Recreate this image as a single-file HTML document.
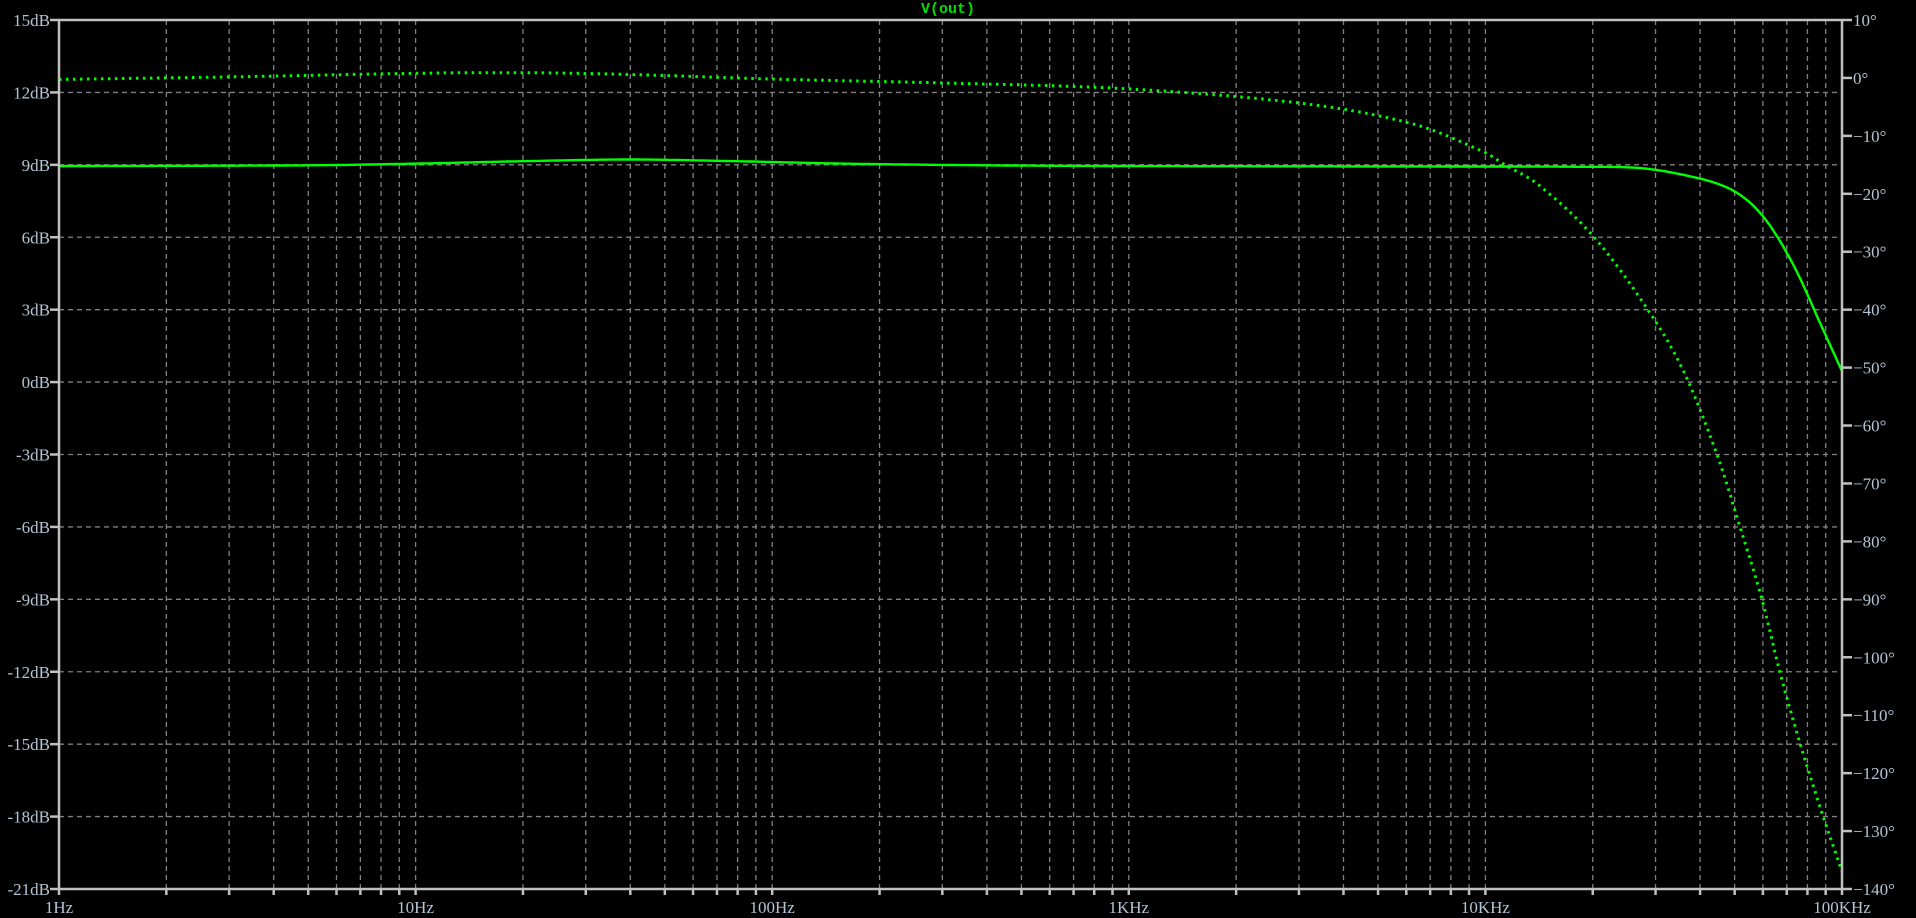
<!DOCTYPE html>
<html><head><meta charset="utf-8">
<style>
html,body{margin:0;padding:0;background:#000;width:1916px;height:918px;overflow:hidden}
svg{display:block}
.l{font-family:"Liberation Serif",serif;font-size:17px;fill:#b4c4d4}
</style></head>
<body>
<svg id="s" width="1916" height="918" xmlns="http://www.w3.org/2000/svg">
<rect width="1916" height="918" fill="#000"/>
<g id="grid"></g>
<g id="labels"></g>
<text x="948" y="13" text-anchor="middle" font-family="Liberation Mono,monospace" font-weight="bold" font-size="15" fill="#00e000">V(out)</text>
<path id="mag" fill="none" stroke="#00ff00" stroke-width="2.4"/>
<path id="ph" fill="none" stroke="#00ff00" stroke-width="3" stroke-dasharray="2.5 4.5"/>
<rect x="59" y="20" width="1783" height="869" fill="none" stroke="#c0c0c0" stroke-width="2.5"/>
</svg>
<script>
var L=59,R=1842,T=20,B=889,W=R-L,H=B-T,D=W/5;
var NS="http://www.w3.org/2000/svg";
function el(p,t,a,txt){var e=document.createElementNS(NS,t);for(var k in a)e.setAttribute(k,a[k]);if(txt)e.textContent=txt;p.appendChild(e);return e;}
var g=document.getElementById('grid'),lb=document.getElementById('labels');
var names=["1Hz","10Hz","100Hz","1KHz","10KHz","100KHz"];
for(var d=0;d<5;d++){for(var m=1;m<10;m++){var x=L+D*(d+Math.log10(m));
 if(!(d==0&&m==1))el(g,'line',{x1:x,y1:T,x2:x,y2:B,stroke:'#808080','stroke-width':1.3,'stroke-dasharray':'5 4'});
 el(g,'line',{x1:x,y1:B,x2:x,y2:B+6,stroke:'#c0c0c0','stroke-width':2.5});}}
el(g,'line',{x1:R,y1:B,x2:R,y2:B+6,stroke:'#c0c0c0','stroke-width':2.5});
for(var i=0;i<6;i++){el(lb,'text',{x:L+D*i,y:913,'text-anchor':'middle','class':'l'},names[i]);}
for(var i=0;i<=12;i++){var y=T+H*i/12;var v=15-3*i;
 if(i>0&&i<12)el(g,'line',{x1:L,y1:y,x2:R,y2:y,stroke:'#808080','stroke-width':1.3,'stroke-dasharray':'5 4'});
 el(g,'line',{x1:L-9,y1:y,x2:L,y2:y,stroke:'#c0c0c0','stroke-width':2.5});
 el(lb,'text',{x:50,y:y+6,'text-anchor':'end','class':'l'},v+'dB');}
for(var i=0;i<=15;i++){var y=T+H*i/15;var v=10-10*i;
 el(g,'line',{x1:R,y1:y,x2:R+10,y2:y,stroke:'#c0c0c0','stroke-width':2.5});
 el(lb,'text',{x:1853,y:y+6,'class':'l'},(v<0?'\u2212'+(-v):v)+'\u00b0');}
function cr(pts,x){var n=pts.length;var i=0;while(i<n-2&&x>pts[i+1][0])i++;
 var p0=pts[Math.max(i-1,0)],p1=pts[i],p2=pts[i+1],p3=pts[Math.min(i+2,n-1)];
 var t=(x-p1[0])/(p2[0]-p1[0]);
 var m1=(p2[1]-p0[1])/(p2[0]-p0[0])*(p2[0]-p1[0]),m2=(p3[1]-p1[1])/(p3[0]-p1[0])*(p2[0]-p1[0]);
 var t2=t*t,t3=t2*t;return (2*t3-3*t2+1)*p1[1]+(t3-2*t2+t)*m1+(-2*t3+3*t2)*p2[1]+(t3-t2)*m2;}
var magP=[[0,8.95],[0.7,8.98],[1,9.05],[1.3,9.15],[1.6,9.22],[1.9,9.15],[2.2,9.05],[2.6,8.98],[3,8.95],[4,8.93],[4.25,8.92],[4.43,8.87],[4.56,8.57],[4.67,8.11],[4.74,7.46],[4.8,6.44],[4.87,4.67],[4.94,2.4],[5,0.45]];
var phP=[[0,-0.25],[0.5,0.2],[1,0.8],[1.3,0.9],[1.6,0.6],[2,-0.2],[2.5,-0.9],[3,-1.9],[3.5,-4.5],[3.8,-8],[4,-12.9],[4.055,-15],[4.15,-18.5],[4.302,-27.3],[4.45,-39.5],[4.554,-50.4],[4.65,-65.1],[4.714,-77.5],[4.776,-90.1],[4.826,-102.6],[4.882,-114.8],[4.944,-126.9],[5,-137]];
var dm='',dp='';
for(var k=0;k<=2000;k++){var d=k/400;var x=(L+d*D).toFixed(1);
 var ym=(T+(15-cr(magP,d))/36*H).toFixed(1);var yp=(T+(10-cr(phP,d))/150*H).toFixed(1);
 dm+=(k?'L':'M')+x+' '+ym;dp+=(k?'L':'M')+x+' '+yp;}
document.getElementById('mag').setAttribute('d',dm);
document.getElementById('ph').setAttribute('d',dp);
</script>
</body></html>
